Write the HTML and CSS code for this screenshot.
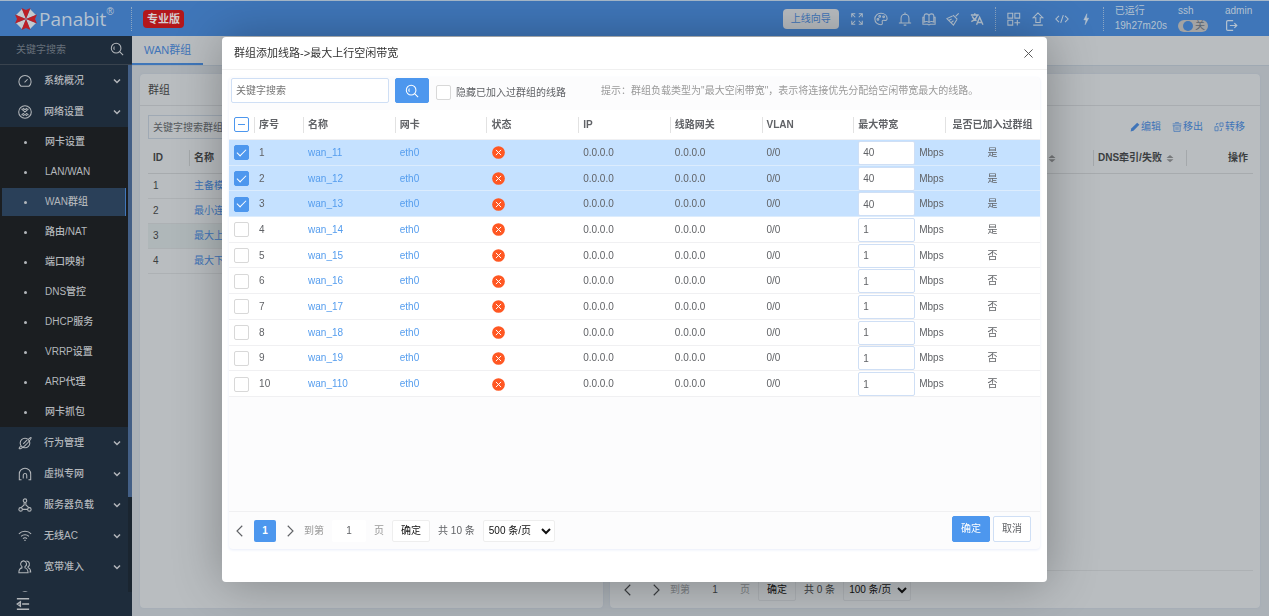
FILE: index.html
```html
<!DOCTYPE html>
<html lang="zh-CN">
<head>
    <meta charset="UTF-8">
    <meta name="viewport" content="width=device-width, initial-scale=1.0">
    <title>Panabit</title>
    <link rel="stylesheet" href="styles.css">
</head>
<body>
    <!-- Icon set -->
    <svg class="sprite" aria-hidden="true">
        <symbol id="i-search" viewBox="0 0 16 16"><circle cx="7" cy="7" r="5.500"/><path d="M11 11l4 4M5 5.200a3 3 0 0 0 0 3.600"/></symbol>
        <symbol id="i-down" viewBox="0 0 16 16"><path d="M2 5l6 6 6-6"/></symbol>
        <symbol id="i-left" viewBox="0 0 16 16"><path d="M11 1L4 8l7 7"/></symbol>
        <symbol id="i-right" viewBox="0 0 16 16"><path d="M5 1l7 7-7 7"/></symbol>
        <symbol id="i-close" viewBox="0 0 16 16"><path d="M3 3l10 10M13 3L3 13"/></symbol>
        <symbol id="i-gauge" viewBox="0 0 16 16"><path d="M3.500 14A7 7 0 1 1 12.500 14zM7.500 9.500L11 6"/></symbol>
        <symbol id="i-net" viewBox="0 0 16 16"><circle cx="8" cy="8" r="7.200"/><path d="M4 4.500l8 7M12 4.500l-8 7M5.500 3.500Q8 6.500 10.500 3.500M5.500 12.500Q8 9.500 10.500 12.500"/></symbol>
        <symbol id="i-planet" viewBox="0 0 16 16"><circle cx="8" cy="8" r="5.500"/><path d="M12 3.500c2-1.500 3-2 3-1.500 1 1-4 6-7 9s-6 4-6.500 3.500S2 12.500 3 11.500M6 9l4.500-4.500"/></symbol>
        <symbol id="i-vpn" viewBox="0 0 16 16"><path d="M1.500 15V8a6.500 6.500 0 0 1 13 0v7M1 14.500h3M12 14.500h3M6 13V9.500a2 2 0 0 1 4 0V13"/></symbol>
        <symbol id="i-nodes" viewBox="0 0 16 16"><circle cx="8" cy="3" r="2"/><circle cx="3" cy="13" r="2"/><circle cx="13" cy="13" r="2"/><path d="M7 5v3l-3.500 3M9 5v3l3.500 3M5 13h6"/></symbol>
        <symbol id="i-wifi" viewBox="0 0 16 16"><path d="M1 5.500a10 10 0 0 1 14 0M3.500 8.300a6.500 6.500 0 0 1 9 0M5.700 11a3.500 3.500 0 0 1 4.600 0M7.300 13h1.400"/></symbol>
        <symbol id="i-users" viewBox="0 0 16 16"><path d="M6 1a3.500 3.500 0 0 1 2 6.500v1.500c3 1 3.500 3 3.500 5.500H1c0-3 1-5 3.500-5.500V7.500A3.600 3.600 0 0 1 6 1zM9.500 1.200c4 0 4.500 5 2 6.500v1c2.500 1 3 2.500 3 5h-1.500"/></symbol>
        <symbol id="i-round" viewBox="0 0 16 16"><circle cx="8" cy="8" r="7"/></symbol>
        <symbol id="i-fold" viewBox="0 0 16 16"><path d="M1 2h14M7 8h8M1 14h14M5 5.500L1.500 8 5 10.500z"/></symbol>
        <symbol id="i-full" viewBox="0 0 16 16"><path d="M2 6V2h4M2 2l4 4M10 2h4v4M14 2l-4 4M2 10v4h4M2 14l4-4M14 10v4h-4M14 14l-4-4"/></symbol>
        <symbol id="i-palette" viewBox="0 0 16 16"><path d="M8 1.500c4 0 7 2.500 7 6 0 2-1.500 2.500-3.500 2-2-.3-2.500 1-2 2.500.4 1.500-.5 2.500-1.500 2.500-4 0-7-2.500-7-6.500s3-6.500 7-6.500z"/><circle cx="4.500" cy="8.500" r="1"/><circle cx="6.500" cy="5" r="1"/><circle cx="11" cy="5.500" r="1"/></symbol>
        <symbol id="i-bell" viewBox="0 0 16 16"><path d="M8 .5V2M3.500 12.500V7a4.500 4.500 0 0 1 9 0v5.500M1 12.500h14M6.500 15h3"/></symbol>
        <symbol id="i-book" viewBox="0 0 16 16"><path d="M8 4C7 1.500 3 1.500 2.500 4v7.500c1.500-1 4.500-1 5.500.5 1-1.500 4-1.500 5.500-.5V4C13 1.500 9 1.500 8 4zM8 4v8M2.500 6H1v8h5.500l1.500.8 1.500-.8H15V6h-1.500"/></symbol>
        <symbol id="i-broom" viewBox="0 0 16 16"><path d="M14.500 1.500L11 5M8 3.500l5 5M7.500 4.500L1 7.500 8.500 15l4-6.500M3.500 9.500l3-1.500M6 12l2.500-2"/></symbol>
        <symbol id="i-lang" viewBox="0 0 16 16"><path d="M1 3.500h9M5.500 1.500v2M8.500 3.500C7.500 7 5 9.500 1.500 11M2.500 5c1 2.500 3 4 5 5M7.500 14.500L11 6l3.800 8.500M8.800 12h4.500" stroke-width="1.600"/></symbol>
        <symbol id="i-grid" viewBox="0 0 16 16"><path d="M1 1.500h5.500V7H1zM9 1.500h5.500V7H9zM1 9.500h5.500V15H1zM11.800 9v6.500M8.500 12.200H15"/></symbol>
        <symbol id="i-upload" viewBox="0 0 16 16"><path d="M8 1L2.500 6.500h3V12h5V6.500h3zM2.500 15h11"/></symbol>
        <symbol id="i-code" viewBox="0 0 16 16"><path d="M4.500 4.500L1 8l3.500 3.500M11.500 4.500L15 8l-3.500 3.500M9.500 3.500l-3 9"/></symbol>
        <symbol id="i-bolt" viewBox="0 0 16 16"><path d="M9 2L5.500 9h2.500L7 14.500 11 7H8.500z" fill="currentColor" stroke-width=".6"/></symbol>
        <symbol id="i-exit" viewBox="0 0 16 16"><path d="M10 2H3.500Q2 2 2 3.500v9Q2 14 3.500 14H10M6 8h8.500M11.500 5l3 3-3 3" stroke-width="1.500"/></symbol>
        <symbol id="i-pen" viewBox="0 0 16 16"><path d="M1 15l1-4.500L11.500 1l3.500 3.500L5.500 14z" fill="currentColor" stroke="none"/></symbol>
        <symbol id="i-trash" viewBox="0 0 16 16"><path d="M1 3h14M1 6h14M3 6v9h10V6M6.500 8v5M9.500 8v5M5 1h6"/></symbol>
        <symbol id="i-move" viewBox="0 0 16 16"><path d="M1.500 7.500h5V14h-5zM9.500 1.500h5V7h-5zM4 5V2.500h3M12 10v3.500H9"/></symbol>
        <symbol id="i-sort" viewBox="0 0 16 16"><path d="M1 7l7-6 7 6zM1 9.500l7 6 7-6z" fill="currentColor" stroke="none"/></symbol>
        <symbol id="i-fail" viewBox="0 0 16 16"><circle cx="8" cy="8" r="7.800" fill="#ff5722" stroke="none"/><path d="M4.800 4.800l6.400 6.400M11.200 4.800l-6.400 6.400" stroke="#fff"/></symbol>
    </svg>

    <header class="topbar">
        <div class="brand">
            <svg class="logo" viewBox="0 0 24 24">
                <path fill="#c3c9cd" d="M12 12L2 8 8 2zM12 12L22 8 16 2zM12 12L22 16l-6 6zM12 12L2 16l6 6z"/>
                <path fill="#bd1f26" d="M12 12L7.500 1 12 3l4.500-2zM12 12L23 7.500 21 12l2 4.500zM12 12l4.500 11L12 21l-4.500 2zM12 12L1 16.500 3 12 1 7.500z"/>
            </svg>
            <span class="brand-name">Panabit</span><sup class="reg">®</sup>
        </div>
        <span class="dots"></span>
        <span class="edition">专业版</span>
        <button class="guide" type="button">上线向导</button>
        <nav class="tools">
            <svg class="icon"><use href="#i-full"/></svg>
            <svg class="icon"><use href="#i-palette"/></svg>
            <svg class="icon"><use href="#i-bell"/></svg>
            <svg class="icon"><use href="#i-book"/></svg>
            <svg class="icon"><use href="#i-broom"/></svg>
            <svg class="icon"><use href="#i-lang"/></svg>
        </nav>
        <span class="dots"></span>
        <nav class="tools">
            <svg class="icon"><use href="#i-grid"/></svg>
            <svg class="icon"><use href="#i-upload"/></svg>
            <svg class="icon"><use href="#i-code"/></svg>
            <svg class="icon"><use href="#i-bolt"/></svg>
        </nav>
        <span class="dots"></span>
        <div class="status">
            <div><span>已运行</span><span>19h27m20s</span></div>
            <div>
                <label for="ssh">ssh</label>
                <span class="switch"><input type="checkbox" id="ssh"><i></i>关</span>
            </div>
            <div><span>admin</span><svg class="icon exit"><use href="#i-exit"/></svg></div>
        </div>
    </header>

    <div class="layout">
        <aside class="sidebar">
            <div class="side-search">
                <input type="text" placeholder="关键字搜索" aria-label="关键字搜索">
                <svg class="icon"><use href="#i-search"/></svg>
            </div>
            <div class="menu-wrap">
                <ul class="menu">
                    <li><a href="#"><svg class="icon"><use href="#i-gauge"/></svg>系统概况<svg class="arrow"><use href="#i-down"/></svg></a></li>
                    <li>
                        <a href="#"><svg class="icon"><use href="#i-net"/></svg>网络设置<svg class="arrow"><use href="#i-down"/></svg></a>
                        <ul class="submenu">
                            <li><a href="#">网卡设置</a></li>
                            <li><a href="#">LAN/WAN</a></li>
                            <li><a href="#" class="active">WAN群组</a></li>
                            <li><a href="#">路由/NAT</a></li>
                            <li><a href="#">端口映射</a></li>
                            <li><a href="#">DNS管控</a></li>
                            <li><a href="#">DHCP服务</a></li>
                            <li><a href="#">VRRP设置</a></li>
                            <li><a href="#">ARP代理</a></li>
                            <li><a href="#">网卡抓包</a></li>
                        </ul>
                    </li>
                    <li><a href="#"><svg class="icon"><use href="#i-planet"/></svg>行为管理<svg class="arrow"><use href="#i-down"/></svg></a></li>
                    <li><a href="#"><svg class="icon"><use href="#i-vpn"/></svg>虚拟专网<svg class="arrow"><use href="#i-down"/></svg></a></li>
                    <li><a href="#"><svg class="icon"><use href="#i-nodes"/></svg>服务器负载<svg class="arrow"><use href="#i-down"/></svg></a></li>
                    <li><a href="#"><svg class="icon"><use href="#i-wifi"/></svg>无线AC<svg class="arrow"><use href="#i-down"/></svg></a></li>
                    <li><a href="#"><svg class="icon"><use href="#i-users"/></svg>宽带准入<svg class="arrow"><use href="#i-down"/></svg></a></li>
                    <li><a href="#"><svg class="icon"><use href="#i-round"/></svg></a></li>
                </ul>
                <div class="scrollbar"><span></span></div>
            </div>
            <div class="side-foot"><svg class="icon"><use href="#i-fold"/></svg></div>
        </aside>

        <main class="main">
            <div class="tabs"><a href="#" class="tab">WAN群组</a></div>
            <div class="cards">
                <section class="card group-card">
                    <h2>群组</h2>
                    <div class="card-body">
                        <input class="group-search" type="text" placeholder="关键字搜索群组" aria-label="关键字搜索群组">
                        <table class="bg-table">
                            <thead><tr><th class="col-id">ID</th><th>名称</th></tr></thead>
                            <tbody>
                                <tr><td>1</td><td><a href="#">主备模式</a></td></tr>
                                <tr><td>2</td><td><a href="#">最小连接</a></td></tr>
                                <tr class="current"><td>3</td><td><a href="#">最大上行</a></td></tr>
                                <tr><td>4</td><td><a href="#">最大下行</a></td></tr>
                            </tbody>
                        </table>
                    </div>
                </section>
                <section class="card line-card">
                    <h2></h2>
                    <div class="card-body">
                        <div class="actions">
                            <a href="#"><svg><use href="#i-pen"/></svg>编辑</a>
                            <a href="#"><svg><use href="#i-trash"/></svg>移出</a>
                            <a href="#"><svg><use href="#i-move"/></svg>转移</a>
                        </div>
                        <table class="bg-table">
                            <thead>
                                <tr>
                                    <th class="col-last right"><svg class="sort"><use href="#i-sort"/></svg></th>
                                    <th class="col-gap"></th>
                                    <th class="col-dns">DNS牵引/失败<svg class="sort"><use href="#i-sort"/></svg></th>
                                    <th class="col-op right">操作</th>
                                </tr>
                            </thead>
                        </table>
                    </div>
                    <div class="pager">
                        <svg class="page-arrow"><use href="#i-left"/></svg>
                        <svg class="page-arrow"><use href="#i-right"/></svg>
                        <label class="muted" for="goto-bg">到第</label>
                        <input type="text" id="goto-bg" value="1">
                        <span class="muted">页</span>
                        <button type="button">确定</button>
                        <span>共 0 条</span>
                        <select aria-label="每页条数"><option>100 条/页</option></select>
                    </div>
                </section>
            </div>
        </main>
    </div>

    <!-- Add line dialog -->
    <div class="shade">
        <div class="dialog" role="dialog" aria-labelledby="dialog-title">
            <div class="dialog-head">
                <h1 id="dialog-title">群组添加线路-&gt;最大上行空闲带宽</h1>
                <button class="close" type="button" aria-label="关闭"><svg><use href="#i-close"/></svg></button>
            </div>
            <form class="panel">
                <div class="filter">
                    <input class="keyword" type="text" placeholder="关键字搜索" aria-label="关键字搜索">
                    <button class="btn primary search-btn" type="button" aria-label="搜索"><svg><use href="#i-search"/></svg></button>
                    <label class="hide-used"><input class="check" type="checkbox"><span>隐藏已加入过群组的线路</span></label>
                    <p class="hint">提示：群组负载类型为"最大空闲带宽"，表示将连接优先分配给空闲带宽最大的线路。</p>
                </div>
                <div class="table-area">
                    <table class="lines">
                        <thead>
                            <tr>
                                <th class="c-check"><input class="check some" type="checkbox" aria-label="全选"></th>
                                <th class="c-no">序号</th>
                                <th>名称</th>
                                <th>网卡</th>
                                <th>状态</th>
                                <th>IP</th>
                                <th>线路网关</th>
                                <th>VLAN</th>
                                <th>最大带宽</th>
                                <th class="c-used">是否已加入过群组</th>
                            </tr>
                        </thead>
                        <tbody id="rows"></tbody>
                    </table>
                </div>
                <div class="panel-foot">
                    <div class="pager">
                        <svg class="page-arrow"><use href="#i-left"/></svg>
                        <span class="page-now">1</span>
                        <svg class="page-arrow"><use href="#i-right"/></svg>
                        <label class="muted" for="goto">到第</label>
                        <input type="text" id="goto" value="1">
                        <span class="muted">页</span>
                        <button type="button">确定</button>
                        <span>共 10 条</span>
                        <select aria-label="每页条数"><option>500 条/页</option></select>
                    </div>
                    <div class="confirm">
                        <button class="btn primary" type="button">确定</button>
                        <button class="btn" type="button">取消</button>
                    </div>
                </div>
            </form>
        </div>
    </div>
    <script src="script.js"></script>
</body>
</html>
```

FILE: styles.css
```css
* {
    box-sizing: border-box;
}

body {
    margin: 0;
    height: 100vh;
    display: flex;
    flex-direction: column;
    overflow: hidden;
    background-color: #abb1b7;
    color: #3b3e41;
    font-family: "Liberation Sans", "Noto Sans CJK SC", sans-serif;
    font-size: 10px;
    line-height: 14px;
}

input, button, select {
    font: inherit;
    color: inherit;
}

a {
    text-decoration: none;
    color: #3f74b8;
}

ul, h1, h2, p {
    margin: 0;
    padding: 0;
    list-style: none;
}

svg {
    display: block;
    flex: none;
    fill: none;
    stroke: currentColor;
    stroke-width: 1.2;
}

.sprite {
    position: absolute;
    width: 0;
    height: 0;
}

.icon {
    width: 14px;
    height: 14px;
}

/* Top bar */
.topbar {
    flex: none;
    display: flex;
    align-items: center;
    height: 36px;
    padding: 0 17px 0 14px;
    border-top: 1px solid #a5b7c9;
    background-color: #3f76b9;
    color: #b4c2d0;
}

.brand {
    display: flex;
    align-items: center;
    width: 117px;
}

.logo {
    width: 24px;
    height: 24px;
    stroke: none;
}

.brand-name {
    margin-left: 1px;
    font-family: "Open Sans", "Noto Sans", sans-serif;
    font-size: 19px;
    line-height: 24px;
}

.reg {
    align-self: flex-start;
    font-size: 10px;
    line-height: 10px;
}

.dots {
    height: 24px;
    border-left: 1px dotted #8ba6c4;
}

.edition {
    margin-left: 11px;
    padding: 2px 4px;
    border-radius: 4px;
    background-color: #b3171b;
    color: #d4cfd1;
    font-size: 11px;
    font-weight: bold;
}

.guide {
    margin-left: auto;
    margin-right: 11px;
    width: 56px;
    height: 20px;
    padding: 0;
    border: none;
    border-radius: 4px;
    background-color: #b8bcc0;
    color: #3f74b8;
}

.tools {
    display: flex;
    gap: 10px;
    margin-right: 11px;
}

.dots + .tools {
    margin-left: 11px;
    margin-right: 10px;
}

.status {
    display: flex;
    gap: 11px;
    margin-left: 11px;
}

.status > div {
    display: flex;
    flex-direction: column;
    gap: 1px;
}

.status > div + div {
    width: 36px;
}

.status > div:last-child {
    width: 27px;
}

.switch {
    display: flex;
    align-items: center;
    justify-content: space-between;
    width: 30px;
    height: 12px;
    margin-top: 1px;
    padding: 0 3px 0 5px;
    border-radius: 6px;
    background-color: #a3a3a3;
    color: #5c6670;
    line-height: 12px;
}

.switch input {
    position: absolute;
    opacity: 0;
}

.switch i {
    width: 10px;
    height: 10px;
    border-radius: 50%;
    background-color: #3f76b9;
}

.exit {
    width: 13px;
    height: 13px;
}

/* Sidebar */
.layout {
    flex: 1;
    display: flex;
    min-height: 0;
}

.sidebar {
    flex: none;
    display: flex;
    flex-direction: column;
    width: 132px;
    background-color: #1e2c3b;
    color: #b3b7bb;
}

.side-search {
    display: flex;
    align-items: center;
    height: 29px;
    padding: 0 8px 2px 16px;
    border-bottom: 1px solid #39434e;
}

.side-search input {
    flex: 1;
    min-width: 0;
    padding: 2px 0 0;
    border: none;
    outline: none;
    background: none;
}

.side-search input::placeholder {
    color: #66707a;
}

.menu-wrap {
    flex: 1;
    display: flex;
    min-height: 0;
    overflow: hidden;
}

.menu {
    flex: 1;
}

.menu a {
    display: flex;
    align-items: center;
    height: 31px;
    padding: 0 7px 0 18px;
    color: #b3b7bb;
    font-weight: 500;
}

.menu .icon {
    margin-right: 12px;
}

.arrow {
    width: 8px;
    height: 8px;
    margin-left: auto;
    stroke-width: 3;
}

.submenu {
    background-color: #1b1e21;
}

.submenu li {
    padding: 1px 2px;
}

.menu .submenu a {
    height: 28px;
    padding: 0 0 0 22px;
}

.submenu a::before {
    content: "";
    width: 3px;
    height: 3px;
    margin-right: 18px;
    border-radius: 50%;
    background-color: #b3b7bb;
}

.submenu .active {
    border-right: 1px solid #4177bb;
    background-color: #2a4059;
}

.scrollbar {
    width: 4px;
    background-color: #1a2530;
}

.scrollbar span {
    display: block;
    height: 82%;
    background-color: #435f86;
}

.side-foot {
    flex: none;
    display: flex;
    align-items: center;
    height: 24px;
    padding-left: 16px;
}

.side-foot .icon {
    stroke-width: 1.6;
}

/* Page behind the dialog */
.main {
    flex: 1;
    display: flex;
    flex-direction: column;
    min-width: 0;
}

.tabs {
    display: flex;
    height: 30px;
    border-bottom: 1px solid #9fa9b3;
    background-color: #b9bdc0;
}

.tab {
    padding: 6px 12px 0;
    border-bottom: 2px solid #3f76b9;
    font-size: 11px;
    line-height: 16px;
}

.cards {
    flex: 1;
    display: flex;
    gap: 7px;
    min-height: 0;
    padding: 8px 9px 8px 8px;
}

.card {
    display: flex;
    flex-direction: column;
    border-radius: 4px;
    background-color: #b9bdc0;
    box-shadow: 0 0 2px #9ea9b5;
}

.group-card {
    width: 463px;
}

.line-card {
    flex: 1;
}

.card h2 {
    height: 32px;
    padding: 0 8px;
    border-bottom: 1px solid #a9adb1;
    font-size: 11px;
    font-weight: normal;
    line-height: 32px;
}

.card-body {
    flex: 1;
    padding: 9px 7px 0 8px;
}

.group-search {
    display: block;
    width: 160px;
    height: 24px;
    padding: 0 4px;
    border: 1px solid #9fa9b4;
    background: none;
}

.group-search::placeholder {
    color: #55595d;
}

.bg-table {
    width: 100%;
    border-spacing: 0;
    table-layout: fixed;
    text-align: left;
}

.bg-table th {
    height: 35px;
    padding: 4px 5px 0;
    border-bottom: 1px solid #a7abae;
}

.bg-table td {
    height: 25px;
    padding: 0 5px;
    border-bottom: 1px solid #adb1b4;
}

.bg-table .current {
    background-color: #afb7b9;
}

.bg-table .col-id {
    width: 41px;
}

.bg-table .col-last {
    padding-right: 1px;
}

.bg-table .col-gap {
    width: 36px;
}

.bg-table .col-dns {
    width: 93px;
}

.bg-table .col-op {
    width: 67px;
}

.bg-table th + th {
    background: linear-gradient(#a4a8ab, #a4a8ab) left 11px / 1px 16px no-repeat;
}

.bg-table .col-gap {
    background: none;
}

.bg-table .right {
    text-align: right;
}

.sort {
    display: inline-block;
    width: 8px;
    height: 9px;
    margin-left: 4px;
    color: #77797b;
    vertical-align: middle;
}

.actions {
    display: flex;
    justify-content: flex-end;
    gap: 11px;
    height: 24px;
    padding: 5px 8px 0 0;
}

.actions a {
    display: flex;
    align-items: center;
    gap: 1px;
    height: 14px;
}

.actions svg {
    width: 10px;
    height: 10px;
}

/* Pagination */
.pager {
    display: flex;
    align-items: center;
    gap: 8px;
}

.page-arrow {
    width: 12px;
    height: 12px;
    stroke-width: 1.5;
}

.page-now {
    width: 22px;
    border-radius: 2px;
    background-color: #4d97ee;
    color: #fff;
    font-weight: bold;
    line-height: 22px;
    text-align: center;
}

.pager input {
    width: 34px;
    height: 22px;
    padding: 0;
    border: none;
    border-radius: 2px;
    background-color: #fff;
    text-align: center;
}

.pager button, .pager select {
    height: 22px;
    border: 1px solid #eee;
    border-radius: 2px;
    background-color: #fff;
    color: #111;
}

.pager button {
    width: 38px;
    padding: 0;
}

.pager select {
    width: 72px;
    padding: 0 1px;
}

.muted {
    color: #999;
}

.line-card .pager {
    height: 38px;
    margin: 0 7px;
    padding-left: 5px;
    border-top: 1px solid #adb1b4;
}

.line-card .page-arrow + .page-arrow {
    margin-left: 8px;
}

.line-card .muted {
    color: #7b7f83;
}

.line-card .pager input, .line-card .pager button, .line-card .pager select {
    border-color: #adb1b5;
    background-color: #b9bdc0;
}

.line-card .pager select {
    width: 68px;
}

/* Dialog */
.shade {
    position: fixed;
    inset: 0;
    display: flex;
    justify-content: center;
    padding: 37px 0 34px;
}

.dialog {
    display: flex;
    flex-direction: column;
    width: 65%;
    border-radius: 4px;
    background-color: #fff;
    box-shadow: 1px 1px 50px rgba(0, 0, 0, 0.3);
    color: #606266;
}

.dialog a {
    color: #559dee;
}

.dialog-head {
    display: flex;
    align-items: center;
    justify-content: space-between;
    height: 33px;
    padding: 0 12px;
    border-bottom: 1px solid #f0f0f0;
}

.dialog-head h1 {
    color: #333;
    font-size: 11px;
    font-weight: normal;
}

.close {
    padding: 0;
    border: none;
    background: none;
    color: #555;
}

.close svg {
    width: 13px;
    height: 13px;
}

.panel {
    flex: 1;
    display: flex;
    flex-direction: column;
    margin: 7px 7px 33px;
    border-radius: 4px;
    background-color: #fcfcfd;
    box-shadow: 0 1px 3px #e8edfa;
}

.filter {
    display: flex;
    align-items: center;
    height: 33px;
    padding: 0 2px 6px;
}

.keyword {
    width: 158px;
    height: 25px;
    padding: 0 4px;
    border: 1px solid #cfdff5;
    border-radius: 2px;
}

.keyword::placeholder {
    color: #757575;
}

.btn {
    width: 38px;
    height: 26px;
    padding: 1px 0 0;
    border: 1px solid #cfdff5;
    border-radius: 2px;
    background-color: #fff;
}

.primary {
    border-color: #4d97ee;
    background-color: #4d97ee;
    color: #fff;
}

.search-btn {
    display: flex;
    align-items: center;
    justify-content: center;
    width: 34px;
    height: 25px;
    margin: 0 7px 0 6px;
}

.search-btn svg {
    width: 14px;
    height: 14px;
}

.hide-used {
    display: flex;
    align-items: center;
    gap: 5px;
    padding-top: 4px;
}

.check {
    appearance: none;
    display: grid;
    place-items: center;
    width: 15px;
    height: 15px;
    margin: 0;
    border: 1px solid #d8d8d8;
    border-radius: 2px;
    background-color: #fff;
}

.check:checked {
    border-color: #4d97ee;
    background-color: #4d97ee;
}

.check:checked::before {
    content: "";
    width: 8px;
    height: 4px;
    margin-bottom: 3px;
    border-left: 1px solid #fff;
    border-bottom: 1px solid #fff;
    transform: rotate(-45deg);
}

.some {
    border-color: #4d97ee;
}

.some::before {
    content: "";
    width: 7px;
    height: 1px;
    background-color: #4d97ee;
}

.hint {
    margin-left: 35px;
    color: #999;
}

.table-area {
    flex: 1;
}

.lines {
    width: 100%;
    height: 287px;
    border-spacing: 0;
    table-layout: fixed;
    background-color: #fff;
    text-align: left;
}

.lines th, .lines td {
    height: 25px;
    padding: 0 5px;
    border-bottom: 1px solid #f0f0f2;
}

.lines td {
    padding-top: 1px;
}

.lines th {
    height: 30px;
    background: linear-gradient(#e2e2e2, #e2e2e2) left center / 1px 16px no-repeat;
    white-space: nowrap;
}

.lines .c-check {
    width: 25px;
    background: none;
}

.lines .c-no {
    width: 49px;
}

.lines .c-used {
    width: 95px;
    text-align: center;
}

.lines .selected td {
    border-bottom-color: #dcecfd;
    background-color: #c5e1ff;
}

.lines .used {
    text-align: center;
}

.fail {
    width: 13px;
    height: 13px;
    margin-left: 1px;
}

.bandwidth {
    display: flex;
    align-items: center;
    gap: 4px;
    height: 23px;
}

.bandwidth input {
    width: 57px;
    height: 24px;
    padding: 0 4px;
    border: 1px solid #cfdff5;
    border-radius: 2px;
}

.panel-foot {
    display: flex;
    align-items: center;
    justify-content: space-between;
    height: 38px;
    padding: 0 9px 0 5px;
    border-top: 1px solid #f0f0f2;
}

.confirm {
    display: flex;
    gap: 3px;
    padding-bottom: 4px;
}
```

FILE: script.js
```js
// name, max bandwidth, already in a group
var lines = [
    ["wan_11", 40, "是"],
    ["wan_12", 40, "是"],
    ["wan_13", 40, "是"],
    ["wan_14", 1, "是"],
    ["wan_15", 1, "否"],
    ["wan_16", 1, "否"],
    ["wan_17", 1, "否"],
    ["wan_18", 1, "否"],
    ["wan_19", 1, "否"],
    ["wan_110", 1, "否"]
];

var html = "";
lines.forEach(function(line, i) {
    var on = i < 3;
    html += '<tr' + (on ? ' class="selected"' : '') + '>' +
        '<td><input class="check" type="checkbox" aria-label="' + line[0] + '"' + (on ? ' checked' : '') + '></td>' +
        '<td>' + (i + 1) + '</td>' +
        '<td><a href="#">' + line[0] + '</a></td>' +
        '<td><a href="#">eth0</a></td>' +
        '<td><svg class="fail"><use href="#i-fail"/></svg></td>' +
        '<td>0.0.0.0</td>' +
        '<td>0.0.0.0</td>' +
        '<td>0/0</td>' +
        '<td><label class="bandwidth"><input type="text" value="' + line[1] + '">Mbps</label></td>' +
        '<td class="used">' + line[2] + '</td>' +
        '</tr>';
});
document.getElementById("rows").innerHTML = html;

document.querySelector(".some").indeterminate = true;
```
